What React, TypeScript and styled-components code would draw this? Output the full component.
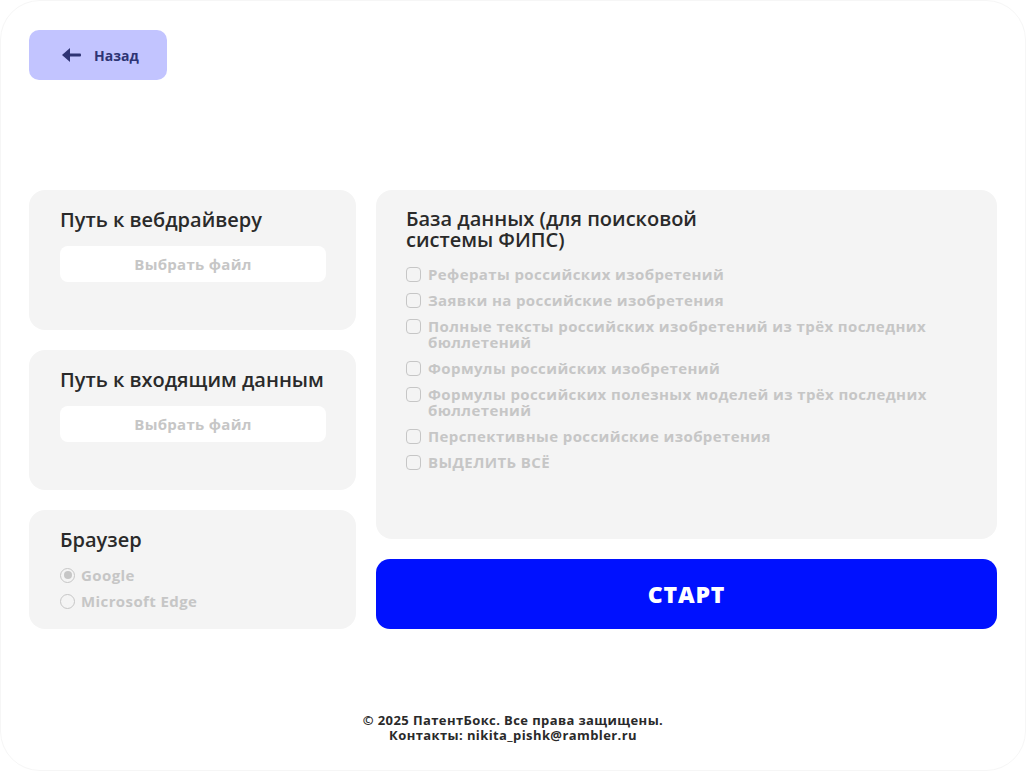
import { createGlobalStyle } from "styled-components";
import styled from "styled-components";

const COLORS = {
  WHITE: "#ffffff",
  CARD: "#f4f4f4",
  TITLE: "#2a2a2a",
  MUTED: "#c6c6c6",
  BACK_BG: "#c2c4ff",
  BACK_TEXT: "#2e3474",
  START: "#0011ff",
};

const FONT = `"Open Sans", "Noto Sans", sans-serif`;

const GlobalStyle = createGlobalStyle`
  * { box-sizing: border-box; }
  html, body { margin: 0; padding: 0; background: ${COLORS.WHITE}; }
  body { font-family: ${FONT}; }
`;

const DATABASES = [
  "Рефераты российских изобретений",
  "Заявки на российские изобретения",
  "Полные тексты российских изобретений из трёх последних бюллетений",
  "Формулы российских изобретений",
  "Формулы российских полезных моделей из трёх последних бюллетений",
  "Перспективные российские изобретения",
  "ВЫДЕЛИТЬ ВСЁ",
];

const BROWSERS = [
  { name: "Google", checked: true },
  { name: "Microsoft Edge", checked: false },
];

function ArrowIcon() {
  return (
    <svg width="19" height="14" viewBox="0 0 19 14" fill="currentColor">
      <path d="M0 7 L8 0 L8 14 Z" />
      <rect x="6" y="5.5" width="13" height="3" rx="1" />
    </svg>
  );
}

function FileCard({ title }: { title: string }) {
  return (
    <Card>
      <CardTitle>{title}</CardTitle>
      <FileButton>Выбрать файл</FileButton>
    </Card>
  );
}

export default function App() {
  return (
    <>
      <GlobalStyle />
      <Frame>
        <Header>
          <BackButton>
            <ArrowIcon />
            <span>Назад</span>
          </BackButton>
        </Header>

        <Main>
          <LeftColumn>
            <FileCard title="Путь к вебдрайверу" />
            <FileCard title="Путь к входящим данным" />
            <Card $short>
              <CardTitle>Браузер</CardTitle>
              <OptionList>
                {BROWSERS.map((b) => (
                  <Option key={b.name}>
                    <Radio $checked={b.checked} />
                    {b.name}
                  </Option>
                ))}
              </OptionList>
            </Card>
          </LeftColumn>

          <RightColumn>
            <DbCard>
              <DbTitle>База данных (для поисковой системы ФИПС)</DbTitle>
              <CheckList>
                {DATABASES.map((d) => (
                  <CheckRow key={d}>
                    <CheckBox />
                    <span>{d}</span>
                  </CheckRow>
                ))}
              </CheckList>
            </DbCard>
            <StartButton>СТАРТ</StartButton>
          </RightColumn>
        </Main>

        <Footer>
          <div>© 2025 ПатентБокс. Все права защищены.</div>
          <div>Контакты: nikita_pishk@rambler.ru</div>
        </Footer>
      </Frame>
    </>
  );
}

const Frame = styled.div`
  width: 1026px;
  height: 771px;
  border-radius: 40px;
  border: 1px solid #f6f6f6;
  background: ${COLORS.WHITE};
  padding: 29px 28px 0 28px;
  display: flex;
  flex-direction: column;
  overflow: hidden;
`;

const Header = styled.div`
  height: 160px;
`;

const BackButton = styled.button`
  width: 138px;
  height: 50px;
  border: none;
  border-radius: 10px;
  background: ${COLORS.BACK_BG};
  color: ${COLORS.BACK_TEXT};
  font-family: ${FONT};
  font-weight: 700;
  font-size: 14px;
  display: flex;
  align-items: center;
  gap: 13px;
  padding: 0 0 0 33px;
  cursor: pointer;
`;

const Main = styled.div`
  display: flex;
  gap: 20px;
`;

const LeftColumn = styled.div`
  width: 327px;
  display: flex;
  flex-direction: column;
  gap: 20px;
`;

const RightColumn = styled.div`
  flex: 1;
  display: flex;
  flex-direction: column;
  gap: 20px;
`;

const Card = styled.div<{ $short?: boolean }>`
  height: ${(p) => (p.$short ? "119px" : "140px")};
  background: ${COLORS.CARD};
  border-radius: 16px;
  padding: 17px 30px 0 31px;
`;

const CardTitle = styled.div`
  font-size: 20px;
  font-weight: 600;
  color: ${COLORS.TITLE};
  line-height: 26px;
`;

const FileButton = styled.div`
  margin-top: 13px;
  height: 36px;
  border-radius: 8px;
  background: ${COLORS.WHITE};
  color: ${COLORS.MUTED};
  font-size: 15px;
  font-weight: 700;
  letter-spacing: 0.3px;
  display: flex;
  align-items: center;
  justify-content: center;
`;

const OptionList = styled.div`
  margin-top: 12px;
  display: flex;
  flex-direction: column;
  gap: 6px;
`;

const Option = styled.label`
  display: flex;
  align-items: center;
  gap: 6px;
  height: 20px;
  color: ${COLORS.MUTED};
  font-size: 15px;
  font-weight: 700;
  letter-spacing: 0.4px;
`;

const Radio = styled.span<{ $checked: boolean }>`
  width: 15px;
  height: 15px;
  border-radius: 50%;
  border: 1.5px solid ${COLORS.MUTED};
  display: flex;
  align-items: center;
  justify-content: center;
  &::after {
    content: "";
    width: 8px;
    height: 8px;
    border-radius: 50%;
    background: ${(p) => (p.$checked ? COLORS.MUTED : "transparent")};
  }
`;

const DbCard = styled.div`
  height: 349px;
  background: ${COLORS.CARD};
  border-radius: 16px;
  padding: 18px 30px 0 30px;
`;

const DbTitle = styled.div`
  max-width: 320px;
  font-size: 20px;
  font-weight: 600;
  color: ${COLORS.TITLE};
  line-height: 21px;
`;

const CheckList = styled.div`
  margin-top: 16px;
  display: flex;
  flex-direction: column;
  gap: 10px;
`;

const CheckRow = styled.label`
  display: flex;
  align-items: flex-start;
  gap: 7px;
  color: ${COLORS.MUTED};
  font-size: 15px;
  font-weight: 700;
  line-height: 16px;
  letter-spacing: 0.4px;
  max-width: 540px;
`;

const CheckBox = styled.span`
  flex: none;
  width: 15px;
  height: 15px;
  margin-top: 1px;
  border-radius: 4px;
  border: 1.5px solid ${COLORS.MUTED};
`;

const StartButton = styled.button`
  height: 70px;
  border: none;
  border-radius: 14px;
  background: ${COLORS.START};
  color: ${COLORS.WHITE};
  font-family: ${FONT};
  font-size: 23px;
  font-weight: 800;
  letter-spacing: 0.8px;
  cursor: pointer;
`;

const Footer = styled.div`
  margin-top: 84px;
  text-align: center;
  font-size: 13px;
  font-weight: 700;
  line-height: 15px;
  letter-spacing: 0.4px;
  color: ${COLORS.TITLE};
`;
